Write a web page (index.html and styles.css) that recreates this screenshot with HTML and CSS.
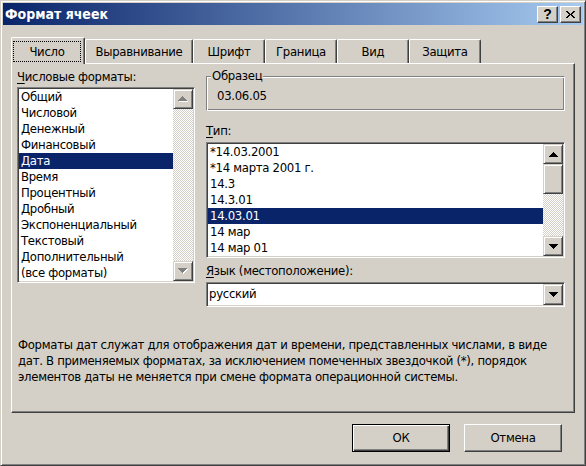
FILE: index.html
```html
<!DOCTYPE html>
<html lang="ru">
<head>
<meta charset="utf-8">
<title>Формат ячеек</title>
<link rel="stylesheet" href="styles.css">
</head>
<body>
<div class="window">
  <div class="titlebar">
    <span class="title">Формат ячеек</span>
    <div class="caption-buttons">
      <span class="cbtn help">?</span>
      <span class="cbtn close">
        <svg width="9" height="7" viewBox="0 0 9 7" shape-rendering="crispEdges"><g fill="#000"><rect x="0" y="0" width="2" height="1"/><rect x="7" y="0" width="2" height="1"/><rect x="1" y="1" width="2" height="1"/><rect x="6" y="1" width="2" height="1"/><rect x="2" y="2" width="2" height="1"/><rect x="5" y="2" width="2" height="1"/><rect x="3" y="3" width="3" height="1"/><rect x="2" y="4" width="2" height="1"/><rect x="5" y="4" width="2" height="1"/><rect x="1" y="5" width="2" height="1"/><rect x="6" y="5" width="2" height="1"/><rect x="0" y="6" width="2" height="1"/><rect x="7" y="6" width="2" height="1"/></g></svg>
      </span>
    </div>
  </div>
  <div class="body">
    <div class="tabs">
      <div class="tab active"><span class="focus">Число</span></div>
      <div class="tab tab-wide">Выравнивание</div>
      <div class="tab">Шрифт</div>
      <div class="tab">Граница</div>
      <div class="tab">Вид</div>
      <div class="tab">Защита</div>
    </div>
    <div class="panel">
      <div class="cols">
        <div class="col-left">
          <div class="label"><u>Ч</u>исловые форматы:</div>
          <div class="listbox fmt-list">
            <div class="items">
              <div class="item">Общий</div>
              <div class="item">Числовой</div>
              <div class="item">Денежный</div>
              <div class="item">Финансовый</div>
              <div class="item selected">Дата</div>
              <div class="item">Время</div>
              <div class="item">Процентный</div>
              <div class="item">Дробный</div>
              <div class="item">Экспоненциальный</div>
              <div class="item">Текстовый</div>
              <div class="item">Дополнительный</div>
              <div class="item">(все форматы)</div>
            </div>
            <div class="vscroll">
              <div class="sbtn">
                <svg width="10" height="6" viewBox="0 0 10 6" shape-rendering="crispEdges"><path fill="#fff" transform="translate(1 1)" d="M4 0h1v1h1v1h1v1h1v1h1v1H0V4h1V3h1V2h1V1h1z"/><path fill="#808080" d="M4 0h1v1h1v1h1v1h1v1h1v1H0V4h1V3h1V2h1V1h1z"/></svg>
              </div>
              <div class="track"></div>
              <div class="sbtn">
                <svg width="10" height="6" viewBox="0 0 10 6" shape-rendering="crispEdges"><path fill="#fff" transform="translate(1 1)" d="M0 0H9v1H8v1H7v1H6v1H5v1H4V4H3V3H2V2H1V1H0z"/><path fill="#808080" d="M0 0H9v1H8v1H7v1H6v1H5v1H4V4H3V3H2V2H1V1H0z"/></svg>
              </div>
            </div>
          </div>
        </div>
        <div class="col-right">
          <div class="group">
            <div class="legend">Образец</div>
            <div class="sample">03.06.05</div>
          </div>
          <div class="label label-type"><u>Т</u>ип:</div>
          <div class="listbox type-list">
            <div class="items">
              <div class="item">*14.03.2001</div>
              <div class="item">*14 марта 2001 г.</div>
              <div class="item">14.3</div>
              <div class="item">14.3.01</div>
              <div class="item selected">14.03.01</div>
              <div class="item">14 мар</div>
              <div class="item">14 мар 01</div>
            </div>
            <div class="vscroll">
              <div class="sbtn">
                <svg width="9" height="5" viewBox="0 0 9 5" shape-rendering="crispEdges"><path fill="#000" d="M4 0h1v1h1v1h1v1h1v1h1v1H0V4h1V3h1V2h1V1h1z"/></svg>
              </div>
              <div class="sbtn thumb"></div>
              <div class="track"></div>
              <div class="sbtn">
                <svg width="9" height="5" viewBox="0 0 9 5" shape-rendering="crispEdges"><path fill="#000" d="M0 0H9v1H8v1H7v1H6v1H5v1H4V4H3V3H2V2H1V1H0z"/></svg>
              </div>
            </div>
          </div>
          <div class="label label-lang"><u>Я</u>зык (местоположение):</div>
          <div class="combo">
            <div class="combo-text">русский</div>
            <div class="sbtn combo-btn">
              <svg width="9" height="5" viewBox="0 0 9 5" shape-rendering="crispEdges"><path fill="#000" d="M0 0H9v1H8v1H7v1H6v1H5v1H4V4H3V3H2V2H1V1H0z"/></svg>
            </div>
          </div>
        </div>
      </div>
      <p class="desc">Форматы дат служат для отображения дат и времени, представленных числами, в виде<br>дат. В применяемых форматах, за исключением помеченных звездочкой (*), порядок<br>элементов даты не меняется при смене формата операционной системы.</p>
    </div>
    <div class="buttons">
      <div class="btn default">ОК</div>
      <div class="btn">Отмена</div>
    </div>
  </div>
</div>
</body>
</html>
```

FILE: styles.css
```css
* { box-sizing: border-box; }
html, body { margin: 0; padding: 0; }
body {
  width: 586px;
  height: 466px;
  overflow: hidden;
  background: #d4d0c8;
  font-family: "DejaVu Sans Condensed", "DejaVu Sans", sans-serif;
  font-size: 13px;
  line-height: 16px;
  letter-spacing: -0.3px;
  color: #000;
}
.window {
  width: 586px;
  height: 466px;
  background: #d4d0c8;
  border: 1px solid;
  border-color: #d4d0c8 #404040 #404040 #d4d0c8;
  box-shadow: inset 1px 1px #fff, inset -1px -1px #808080;
  padding: 2px;
}
.titlebar {
  height: 22px;
  display: flex;
  align-items: center;
  justify-content: space-between;
  padding: 0 2px 0 2px;
  background: linear-gradient(to right, #0a246a, #a6caf0);
}
.title {
  color: #fff;
  font-weight: bold;
  font-size: 14px;
  letter-spacing: 0;
}
.caption-buttons { display: flex; gap: 2px; }
.cbtn {
  width: 21px;
  height: 17px;
  background: #d4d0c8;
  border: 1px solid;
  border-color: #fff #404040 #404040 #fff;
  box-shadow: inset -1px -1px #808080;
  display: flex;
  align-items: center;
  justify-content: center;
}
.help {
  font-weight: bold;
  font-size: 14px;
  line-height: 14px;
  letter-spacing: 0;
  font-family: "Liberation Sans", sans-serif;
}
.body { padding: 12px 8px 0; }
.tabs {
  display: flex;
  align-items: flex-end;
  height: 26px;
}
.tab {
  width: 72px;
  height: 24px;
  border-top: 1px solid #fff;
  border-left: 1px solid #fff;
  border-right: 1px solid #404040;
  box-shadow: inset -1px 0 #808080;
  border-radius: 2px 2px 0 0;
  text-align: center;
  padding-top: 4px;
  white-space: nowrap;
}
.tab-wide { width: 108px; }
.tab.active {
  position: relative;
  z-index: 1;
  width: 74px;
  height: 27px;
  margin-bottom: -1px;
  padding: 3px 0 0 1px;
  background: #d4d0c8;
}
.focus {
  display: block;
  width: 68px;
  height: 21px;
  border: 1px dotted #000;
  padding-top: 2px;
}
.panel {
  height: 350px;
  border-top: 1px solid #fff;
  border-left: 1px solid #fff;
  border-right: 1px solid #404040;
  border-bottom: 1px solid #404040;
  box-shadow: inset -1px -1px #808080;
  padding: 5px 0 0 5px;
}
.cols {
  display: flex;
  align-items: flex-start;
  gap: 11px;
}
.col-left { width: 178px; }
.col-right { width: 359px; }
.label { height: 16px; white-space: nowrap; }
.label u { text-underline-offset: 2px; }
.listbox {
  display: flex;
  background: #fff;
  border: 1px solid;
  border-color: #808080 #fff #fff #808080;
  box-shadow: inset 1px 1px #404040, inset -1px -1px #d4d0c8;
  padding: 1px;
}
.fmt-list { margin-top: 2px; height: 196px; }
.type-list { margin-top: 3px; height: 116px; }
.items { flex: 1; overflow: hidden; }
.item {
  height: 16px;
  padding-left: 2px;
  white-space: nowrap;
}
.item.selected { background: #0a246a; color: #fff; }
.vscroll {
  width: 20px;
  display: flex;
  flex-direction: column;
}
.sbtn {
  width: 20px;
  height: 20px;
  flex: none;
  background: #d4d0c8;
  border: 1px solid;
  border-color: #d4d0c8 #404040 #404040 #d4d0c8;
  box-shadow: inset 1px 1px #fff, inset -1px -1px #808080;
  display: flex;
  align-items: center;
  justify-content: center;
}
.sbtn svg { display: block; }
.thumb { height: 30px; }
.track {
  flex: 1;
  background: repeating-conic-gradient(#fff 0 25%, #d4d0c8 0 50%) 0 0 / 2px 2px;
}
.group {
  margin-top: 7px;
  height: 35px;
  border: 1px solid;
  border-color: #808080 #fff #fff #808080;
  box-shadow: inset 1px 1px #fff, inset -1px -1px #808080;
}
.legend {
  width: fit-content;
  margin: -9px 0 0 4px;
  padding: 0 1px;
  background: #d4d0c8;
}
.sample { margin: 4px 0 0 10px; }
.label-type { margin-top: 12px; }
.label-lang { margin-top: 5px; }
.combo {
  margin-top: 3px;
  height: 25px;
  display: flex;
  background: #fff;
  border: 1px solid;
  border-color: #808080 #fff #fff #808080;
  box-shadow: inset 1px 1px #404040, inset -1px -1px #d4d0c8;
  padding: 1px;
}
.combo-text { flex: 1; padding: 2px 0 0 1px; }
.combo-btn { height: 21px; }
.desc {
  margin: 30px 0 0 1px;
  white-space: nowrap;
}
.buttons {
  display: flex;
  justify-content: flex-end;
  gap: 14px;
  margin-top: 11px;
  padding-right: 13px;
}
.btn {
  width: 98px;
  height: 28px;
  display: flex;
  align-items: center;
  justify-content: center;
  border: 1px solid;
  border-color: #fff #404040 #404040 #fff;
  box-shadow: inset -1px -1px #808080;
}
.btn.default {
  border-color: #000;
  box-shadow: inset 1px 1px #fff, inset -1px -1px #404040, inset -2px -2px #808080;
}
```
